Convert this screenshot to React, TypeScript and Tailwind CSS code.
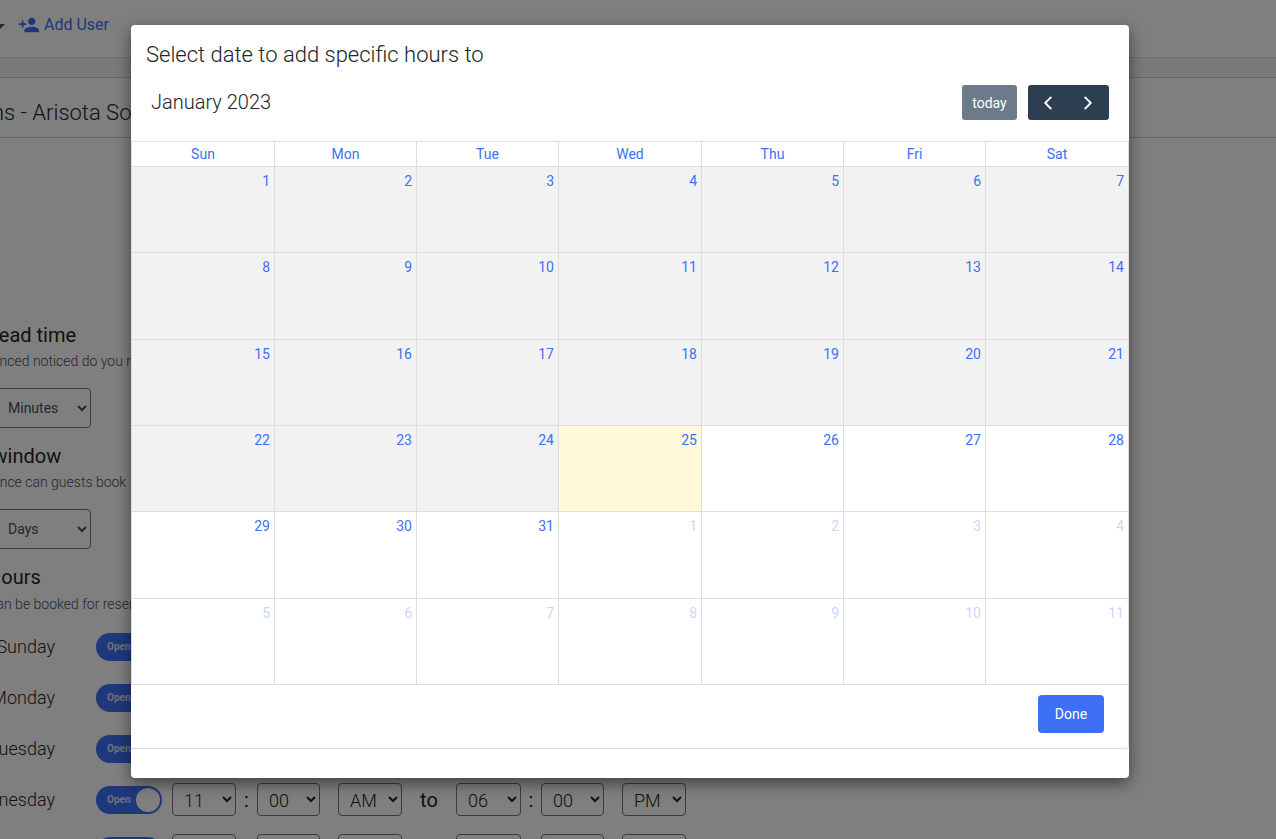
import { ChevronLeft, ChevronRight } from 'lucide-react';
import { MdPersonAdd } from 'react-icons/md';

const days = ['Sun', 'Mon', 'Tue', 'Wed', 'Thu', 'Fri', 'Sat'];
const hourRows = ['Sunday', 'Monday', 'Tuesday', 'Wednesday', 'Thursday'];

const cells = [
  ...Array.from({ length: 31 }, (_, i) => ({ day: i + 1, muted: false })),
  ...Array.from({ length: 11 }, (_, i) => ({ day: i + 1, muted: true })),
];

function TimeSelect({ value, className }: { value: string; className: string }) {
  return (
    <select
      defaultValue={value}
      className={`h-[33px] rounded border border-[#777] bg-transparent pl-[7px] pt-[2px] text-[18px] font-light text-[#212529] ${className}`}
    >
      <option>{value}</option>
    </select>
  );
}

function HoursRow({ name }: { name: string }) {
  return (
    <div className="flex h-[51px] items-center">
      <div className="ml-[-60px] w-[115px] text-right text-[18px] font-light text-[#212529]">{name}</div>
      <div className="relative ml-[41px] flex h-7 w-[66px] items-center rounded-full bg-[#3d70f6]">
        <span className="ml-[11px] text-[10px] font-bold text-white/80">Open</span>
        <span className="absolute right-[2px] top-[2px] h-6 w-6 rounded-full bg-white" />
      </div>
      <TimeSelect value="11" className="ml-[10px] w-16" />
      <span className="w-[21px] text-center text-[20px] text-[#212529]">:</span>
      <TimeSelect value="00" className="w-[63px]" />
      <TimeSelect value="AM" className="ml-[18px] w-16" />
      <span className="w-[54px] text-center text-[20px] text-[#212529]">to</span>
      <TimeSelect value="06" className="w-[65px]" />
      <span className="w-5 text-center text-[20px] text-[#212529]">:</span>
      <TimeSelect value="00" className="w-[63px]" />
      <TimeSelect value="PM" className="ml-[18px] w-16" />
    </div>
  );
}

function LeadSelect({ value, className }: { value: string; className?: string }) {
  return (
    <select
      defaultValue={value}
      className={`ml-[-40px] block h-10 w-[131px] rounded border border-[#777] bg-transparent pl-[43px] text-sm text-[#495057] ${className ?? ''}`}
    >
      <option>{value}</option>
    </select>
  );
}

export default function App() {
  return (
    <div className="relative h-[839px] w-[1276px] overflow-hidden bg-white font-['Roboto',sans-serif]">
      <div className="flex h-[58px] items-center border-b border-[#ddd] pb-[7px]">
        <span className="ml-[-5px] mt-[3px] h-0 w-0 border-x-[5px] border-t-[5px] border-x-transparent border-t-[#555]" />
        <button type="button" className="ml-[13px] flex items-center gap-[4px] text-base text-[#3d70f6]">
          <MdPersonAdd size={22} />
          Add User
        </button>
      </div>
      <div className="h-[19px] bg-[#f4f4f4]" />
      <div className="flex h-[61px] items-center overflow-hidden whitespace-nowrap border-y border-[#ccc] pt-[10px] text-[22px] font-light text-[#212529]">
        <span className="ml-[-8px]">ns - Arisota Sonoran Desert Resort</span>
      </div>

      <div className="whitespace-nowrap">
        <h2 className="ml-[-12px] mt-[184px] text-[20px] font-normal leading-[26px] text-[#212529]">Lead time</h2>
        <p className="ml-[-100px] mt-[3px] text-sm font-light leading-[21px] text-[#495057]">How much advanced noticed do you require</p>
        <LeadSelect value="Minutes" className="mt-[16px]" />

        <h2 className="ml-[-85px] mt-[15px] text-[20px] font-normal leading-[26px] text-[#212529]">Booking window</h2>
        <p className="ml-[-96px] mt-[3px] text-sm font-light leading-[21px] text-[#495057]">How far in advance can guests book</p>
        <LeadSelect value="Days" className="mt-[16px]" />

        <h2 className="ml-[-13px] mt-[15px] text-[20px] font-normal leading-[26px] text-[#212529]">Hours</h2>
        <p className="ml-[-79px] mt-[4px] text-sm font-light leading-[21px] text-[#495057]">Hours that can be booked for reservations</p>
        <div className="mt-[6px]">
          {hourRows.map((name) => (
            <HoursRow key={name} name={name} />
          ))}
        </div>
      </div>

      <div className="absolute inset-0 bg-black/50" />

      <div className="absolute left-[131px] top-[25px] h-[753px] w-[998px] rounded bg-white shadow-[0_5px_15px_rgba(0,0,0,0.5)]">
        <div className="px-[15px] pt-[15px] text-[22px] font-light leading-[30px] text-[#212529]">Select date to add specific hours to</div>
        <div className="mt-[15px] flex h-[35px] items-center justify-between pl-5 pr-5">
          <div className="mb-[2px] text-[20px] font-light text-[#212529]">January 2023</div>
          <div className="flex">
            <button type="button" className="h-[35px] w-[55px] rounded-[3px] bg-[#6c7a89] text-sm text-white">today</button>
            <div className="ml-[11px] flex h-[35px] w-[81px] items-center justify-between rounded-[3px] bg-[#2c3e50] pl-[9px] pr-[10px] text-white">
              <ChevronLeft size={22} />
              <ChevronRight size={22} />
            </div>
          </div>
        </div>

        <div className="mt-[21px] rounded-br border-b border-r border-[#ddd]">
          <div className="grid grid-cols-[143px_142px_142px_143px_142px_142px_1fr] border-l border-t border-[#ddd]">
            {days.map((day) => (
              <div key={day} className="h-[25px] border-b border-r border-[#ddd] text-center text-sm leading-[25px] text-[#3d70f6] [&:nth-child(7n)]:border-r-0">
                {day}
              </div>
            ))}
            {cells.map((cell, index) => (
              <div
                key={index}
                className={`h-[86.33px] border-b border-r border-[#ddd] pr-[4px] pt-[4px] text-right text-sm leading-[21px] [&:nth-child(7n)]:border-r-0 ${
                  index === 24 ? 'bg-[#fff8d9]' : index < 24 ? 'bg-[#f2f2f2]' : ''
                } ${cell.muted ? 'text-[#3d70f6]/30' : 'text-[#3d70f6]'}`}
              >
                {cell.day}
              </div>
            ))}
          </div>
          <div className="flex h-[63px] items-start justify-end pr-6 pt-[10px]">
            <button type="button" className="h-[38px] w-[66px] rounded bg-[#3d70f6] text-sm text-white">Done</button>
          </div>
        </div>
      </div>
    </div>
  );
}
